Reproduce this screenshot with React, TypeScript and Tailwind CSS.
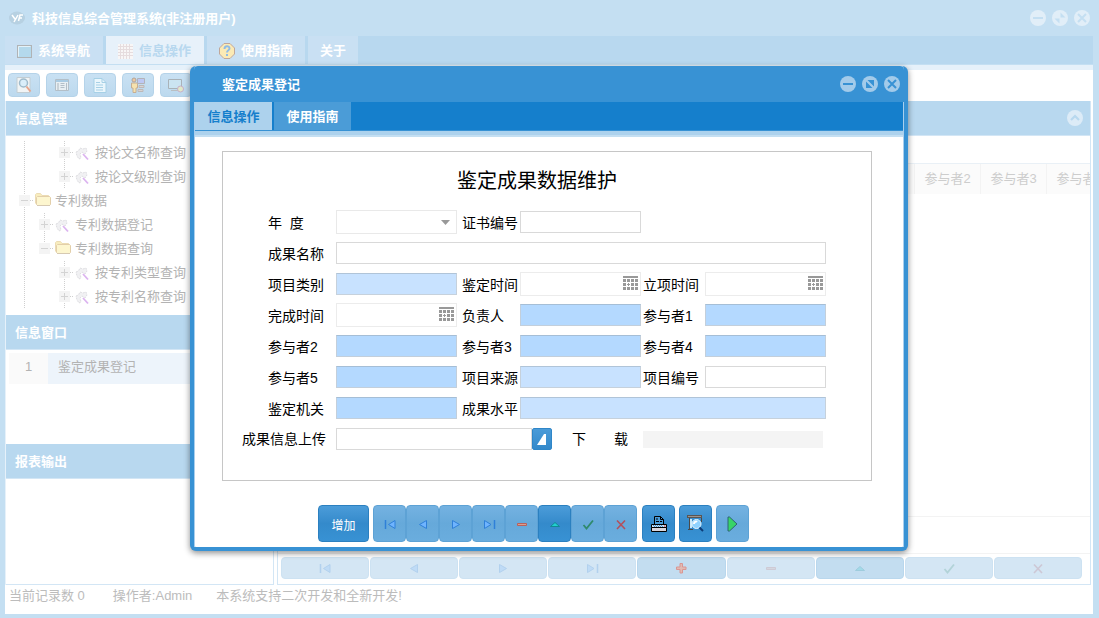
import React from "react";
import clsx from "clsx";

type NavKind = "first" | "prev" | "next" | "last" | "plus" | "minus" | "up" | "check" | "cross";

const NAV_LABELS: Record<NavKind, string> = {
    first: "首记录",
    prev: "上一条",
    next: "下一条",
    last: "末记录",
    plus: "新增",
    minus: "删除",
    up: "编辑",
    check: "保存",
    cross: "取消",
};

function NavIcon({ kind }: { kind: NavKind }) {
    return (
        <svg width="14" height="14" viewBox="0 0 14 14" fill="none" aria-hidden="true">
            {kind === "first" && (
                <>
                    <path d="M2.500 3v9" stroke="#2f80d8" strokeWidth="1.500" />
                    <path d="M12 3.500v8L5.500 7.500z" fill="#6fb4ff" stroke="#2f80d8" />
                </>
            )}
            {kind === "prev" && <path d="M10.500 3.500v8L3.500 7.500z" fill="#6fb4ff" stroke="#2f80d8" />}
            {kind === "next" && <path d="M3.500 3.500v8l7-4z" fill="#6fb4ff" stroke="#2f80d8" />}
            {kind === "last" && (
                <>
                    <path d="M12.500 3v9" stroke="#2f80d8" strokeWidth="1.500" />
                    <path d="M2.500 3.500v8L9 7.500z" fill="#6fb4ff" stroke="#2f80d8" />
                </>
            )}
            {kind === "plus" && <path d="M6 2.500h2.500V6H12v2.500H8.500V12H6V8.500H2.500V6H6z" fill="#ff9a78" stroke="#f0523a" />}
            {kind === "minus" && <path d="M2.500 6.500h9v2h-9z" fill="#d8a090" stroke="#b8605c" />}
            {kind === "up" && <path d="M2.500 9.500h9L7 5.500z" fill="#22d0cf" stroke="#108a94" />}
            {kind === "check" && <path d="M2.500 8l3 3.500 6.500-8" stroke="#2f8a6c" strokeWidth="1.800" />}
            {kind === "cross" && <path d="M3 3.500l8 8.500M11 3.500L3 12" stroke="#b4505c" strokeWidth="1.600" />}
        </svg>
    );
}

function WindowButtons({ color, maximized }: { color: string; maximized: boolean }) {
    const button = clsx("size-4 rounded-full", maximized ? "bg-[#e1eef8]" : "bg-[#a3cbea]");
    return (
        <div className="flex gap-1.5">
            <button type="button" aria-label="最小化" className={button}>
                <svg viewBox="0 0 16 16" aria-hidden="true">
                    <path d="M3 8h10" stroke={color} strokeWidth="2" />
                </svg>
            </button>
            <button type="button" aria-label="还原" className={button}>
                <svg viewBox="0 0 16 16" fill={color} aria-hidden="true">
                    {maximized ? (
                        <path d="M8.500 2.500v5h5zM7.500 13.500v-5h-5z" />
                    ) : (
                        <path d="M5.500 4H12v6.500zM4 5.500V12h6.500z" />
                    )}
                </svg>
            </button>
            <button type="button" aria-label="关闭" className={button}>
                <svg viewBox="0 0 16 16" aria-hidden="true">
                    <path d="M4 4l8 8M12 4l-8 8" stroke={color} strokeWidth="2" />
                </svg>
            </button>
        </div>
    );
}

/* Main window: menu tabs */

function MainTabs() {
    const tab = "flex h-full items-center gap-1.5 px-3 pt-0.5 text-[13px] font-bold";
    return (
        <nav className="flex h-[29px] gap-[3px] border-b border-[#c4dff2] bg-[#b8d8ef]">
            <button type="button" className={clsx(tab, "w-[98px] bg-[#c9e0f3] text-white")}>
                <svg width="15" height="13" viewBox="0 0 15 13" aria-hidden="true">
                    <rect x=".5" y=".5" width="14" height="12" fill="#b4d9ec" stroke="#b0b3b5" />
                    <path d="M1.500 11.500v-10h12" fill="none" stroke="#e4f2f9" />
                </svg>
                系统导航
            </button>
            <button type="button" className={clsx(tab, "w-[98px] bg-[#e7f1fa] text-[#b8d8ef]")}>
                <svg width="15" height="15" viewBox="0 0 15 15" aria-hidden="true">
                    <rect width="15" height="15" fill="#f8f6f6" />
                    <path
                        d="M0 2.500h15M0 5.500h15M0 8.500h15M0 11.500h15M2.500 0v15M5.500 0v15M8.500 0v15M11.500 0v15"
                        stroke="#e6dcde"
                    />
                </svg>
                信息操作
            </button>
            <button type="button" className={clsx(tab, "w-[98px] bg-[#c9e0f3] text-white")}>
                <svg width="16" height="16" viewBox="0 0 16 16" aria-hidden="true">
                    <path d="M5 .5h6L15.500 5v6L11 15.500H5L.5 11V5z" fill="#fbeab5" stroke="#c0a79a" />
                    <path
                        d="M5.500 6c0-3.500 5-3.500 5-.5 0 2-2.500 1.500-2.500 4M8 11v2"
                        fill="none"
                        stroke="#8fbce6"
                        strokeWidth="2"
                    />
                </svg>
                使用指南
            </button>
            <button type="button" className={clsx(tab, "bg-[#c9e0f3] text-white")}>
                关于
            </button>
        </nav>
    );
}

function Toolbar() {
    const button =
        "flex h-6 w-8 items-center justify-center rounded-sm border border-[#b5d3e9] bg-linear-to-b from-[#c9e1f3] to-[#bcd9ee]";
    return (
        <div className="flex h-[31px] gap-1.5 bg-white px-[3px] pt-[3px]">
            <button type="button" aria-label="查找" className={button}>
                <svg width="16" height="16" viewBox="0 0 16 16" fill="none" aria-hidden="true">
                    <path d="M1 .5h13v15H1z" fill="#f1f4f5" stroke="#c2cdd3" />
                    <circle cx="7.500" cy="6" r="4" fill="#dbeefa" stroke="#9fbbcc" strokeWidth="1.500" />
                    <path d="M10.500 9.500l4 5" stroke="#e6a58d" strokeWidth="2" />
                </svg>
            </button>
            <button type="button" aria-label="表单" className={button}>
                <svg width="14" height="14" viewBox="0 0 14 14" fill="none" aria-hidden="true">
                    <path d="M.5 1.500h13v11H.5z" fill="#e8eff3" stroke="#b3bfc8" />
                    <path d="M1 3h12" stroke="#a9cbe3" strokeWidth="2" />
                    <path d="M3 5v7" stroke="#c9d2d8" strokeWidth="2" />
                    <path d="M5.500 5.500h4M5.500 7.500h4M5.500 9.500h4M11.500 5v7" stroke="#b3bfc8" />
                </svg>
            </button>
            <button type="button" aria-label="文档" className={button}>
                <svg width="14" height="15" viewBox="0 0 14 15" fill="none" aria-hidden="true">
                    <path d="M1 .5h8l4 4v10H1z" fill="#eaf6fc" stroke="#a6d0e6" />
                    <path d="M9 .5v4h4M3 4.500h4M3 7h7M3 9.500h7M3 12h7" stroke="#a6d0e6" />
                </svg>
            </button>
            <button type="button" aria-label="用户" className={button}>
                <svg width="16" height="16" viewBox="0 0 16 16" fill="none" aria-hidden="true">
                    <circle cx="4" cy="3" r="2" fill="#eec8a0" stroke="#b0a59c" />
                    <path d="M1.500 6h6v5H6v4.500H3V11H1.500z" fill="#f6e2ae" stroke="#c6ae92" />
                    <path d="M7.500 1.500h7v5h-7z" fill="#bdc8f4" stroke="#b3b3b8" />
                    <path d="M9 8.500h5v2H9zM8 12.500h5v2H8z" fill="#d8d4d4" stroke="#bdb8b8" />
                </svg>
            </button>
            <button type="button" aria-label="监控" className={button}>
                <svg width="17" height="15" viewBox="0 0 17 15" fill="none" aria-hidden="true">
                    <path d="M.5 1.500h13v9H.5z" fill="#cbe4f2" stroke="#a9b2b8" />
                    <path d="M3 12.500h8" stroke="#b9bfc3" />
                    <circle cx="12.500" cy="11" r="3" fill="#dfe8c8" stroke="#c8aec8" />
                </svg>
            </button>
        </div>
    );
}

/* Left side: tree */

type TreeNode = {
    text: string;
    level: 0 | 1 | 2;
    folder?: boolean;
    lastChild?: boolean;
};

const TREE: TreeNode[] = [
    { text: "按论文名称查询", level: 2 },
    { text: "按论文级别查询", level: 2, lastChild: true },
    { text: "专利数据", level: 0, folder: true },
    { text: "专利数据登记", level: 1 },
    { text: "专利数据查询", level: 1, folder: true, lastChild: true },
    { text: "按专利类型查询", level: 2 },
    { text: "按专利名称查询", level: 2 },
];

function TreeGuide() {
    return (
        <svg width="20" height="24" aria-hidden="true">
            <path d="M10.500 0v24" stroke="#cfcfcf" strokeDasharray="1 1" />
        </svg>
    );
}

function TreeExpander({ open, last }: { open?: boolean; last?: boolean }) {
    return (
        <svg width="20" height="24" fill="none" aria-hidden="true">
            <path d={last ? "M10.500 0v12" : "M10.500 0v24"} stroke="#cfcfcf" strokeDasharray="1 1" />
            <path d="M16 11.500h4" stroke="#cfcfcf" strokeDasharray="1 1" />
            <rect x="5" y="6" width="11" height="11" fill="#f4f4f4" />
            <path d={open ? "M7 11.500h7" : "M7 11.500h7M10.500 8v7"} stroke="#d3d3d3" />
        </svg>
    );
}

function FolderIcon() {
    return (
        <svg className="mb-1" width="16" height="13" viewBox="0 0 16 13" fill="none" aria-hidden="true">
            <path d="M.5 10.500v-9l1-1h4l1.500 2h6.500l1 1.500" fill="#f8edbe" stroke="#ecdcb4" />
            <path d="M2.500 3.500h12l1 1v7l-1 1h-12l-1-1v-7z" fill="#fdf6cf" stroke="#e3cfaa" />
            <path d="M2 12.500h13" stroke="#d6c9b2" />
        </svg>
    );
}

function WandIcon() {
    return (
        <svg width="15" height="15" viewBox="0 0 15 15" fill="none" aria-hidden="true">
            <path
                d="M1 6l2.500-1L5 2l3 1 3-1 1 3-2 3-3-2-2 2 1 4-2 1-2-3z"
                fill="#f1f1f3"
                stroke="#dedee2"
                strokeDasharray="2 1"
            />
            <path d="M8 8l5 5.500" stroke="#dcb4f0" strokeWidth="1.800" />
        </svg>
    );
}

function Tree() {
    return (
        <ul className="h-[179px] overflow-hidden pt-[5px] pl-2">
            {TREE.map((node) => (
                <li key={node.text} className="flex h-6 items-center text-[13px] whitespace-nowrap text-[#b3b3b3]">
                    {node.level > 0 && <TreeGuide />}
                    {node.level > 1 && <span className="w-5" />}
                    <TreeExpander open={node.folder} last={node.lastChild && node.folder} />
                    <span className="flex w-[21px] justify-center pr-1">
                        {node.folder ? <FolderIcon /> : <WandIcon />}
                    </span>
                    {node.text}
                </li>
            ))}
        </ul>
    );
}

function PanelHeader({ title }: { title: string }) {
    return (
        <h2 className="flex h-[35px] items-center border-b border-[#d3e6f5] bg-[#b8d8ef] px-[9px] pt-0.5 text-[13px] font-bold text-white">
            {title}
        </h2>
    );
}

function Sidebar() {
    return (
        <aside className="flex w-[268px] flex-col border-r border-b border-[#d3e6f5] bg-white">
            <PanelHeader title="信息管理" />
            <Tree />
            <PanelHeader title="信息窗口" />
            <div className="h-[94px] p-[3px]">
                <table className="w-full text-[13px] text-[#b3b3b3]">
                    <tbody>
                        <tr className="h-[31px]">
                            <td className="w-[39px] bg-[#fafafa] pb-1 text-center">1</td>
                            <td className="bg-[#edf4fb] pb-1 pl-2.5">鉴定成果登记</td>
                        </tr>
                    </tbody>
                </table>
            </div>
            <PanelHeader title="报表输出" />
        </aside>
    );
}

/* Right side: data grid */

const MAIN_NAV: NavKind[] = ["first", "prev", "next", "last", "plus", "minus", "up", "check", "cross"];

function DataPanel() {
    return (
        <section className="flex min-w-0 flex-1 flex-col border-r border-b border-l border-[#d3e6f5] bg-white">
            <div className="flex h-[35px] items-center justify-end border-b border-[#d3e6f5] bg-[#b8d8ef] pr-[7px]">
                <button type="button" aria-label="收起" className="size-4 rounded-full bg-[#dcebf7]">
                    <svg viewBox="0 0 16 16" fill="none" aria-hidden="true">
                        <path d="M4 10l4-4 4 4" stroke="#b8d8ef" strokeWidth="2.200" />
                    </svg>
                </button>
            </div>
            <div className="mt-[27px] flex-1 overflow-hidden border-t border-[#e9f0f6]">
                <table className="w-[834px] table-fixed text-[13px]">
                    <thead>
                        <tr className="h-[30px] bg-[#fbfbfb] text-left whitespace-nowrap text-[#cdcdcd]">
                            <th className="w-[636px] border-r border-[#f3f3f3]" />
                            <th className="border-r border-[#f3f3f3] pl-2.5 font-normal">参与者2</th>
                            <th className="border-r border-[#f3f3f3] pl-2.5 font-normal">参与者3</th>
                            <th className="pl-2.5 font-normal">参与者4</th>
                        </tr>
                    </thead>
                </table>
            </div>
            <div className="h-[38px] border-y border-[#f3f3f3]" />
            <div className="flex h-[30px] gap-px pt-[3px] pr-2 pb-1 pl-[3px]">
                {MAIN_NAV.map((kind) => (
                    <button
                        key={kind}
                        type="button"
                        aria-label={NAV_LABELS[kind]}
                        className={clsx(
                            "flex h-[22px] flex-1 items-center justify-center rounded-sm border",
                            kind === "plus" || kind === "up"
                                ? "border-[#b9d7ed] bg-[#c3ddf0]"
                                : "border-[#cde2f2] bg-[#d4e6f4]"
                        )}
                    >
                        <span className={kind === "plus" ? "opacity-50" : "opacity-20"}>
                            <NavIcon kind={kind} />
                        </span>
                    </button>
                ))}
            </div>
        </section>
    );
}

/* Dialog: record form */

type Field = {
    id: string;
    label: string;
    kind: "select" | "text" | "date";
    column: 1 | 2 | 3;
    tone?: "required" | "lookup";
    span?: string;
};

const FIELDS: Field[] = [
    { id: "year", label: "年\u00a0\u00a0度", kind: "select", column: 1 },
    { id: "cert-no", label: "证书编号", kind: "text", column: 2 },
    { id: "name", label: "成果名称", kind: "text", column: 1, span: "col-span-5" },
    { id: "category", label: "项目类别", kind: "text", column: 1, tone: "lookup" },
    { id: "appraisal-date", label: "鉴定时间", kind: "date", column: 2 },
    { id: "start-date", label: "立项时间", kind: "date", column: 3 },
    { id: "finish-date", label: "完成时间", kind: "date", column: 1 },
    { id: "owner", label: "负责人", kind: "text", column: 2, tone: "required" },
    { id: "member1", label: "参与者1", kind: "text", column: 3, tone: "required" },
    { id: "member2", label: "参与者2", kind: "text", column: 1, tone: "required" },
    { id: "member3", label: "参与者3", kind: "text", column: 2, tone: "required" },
    { id: "member4", label: "参与者4", kind: "text", column: 3, tone: "required" },
    { id: "member5", label: "参与者5", kind: "text", column: 1, tone: "required" },
    { id: "source", label: "项目来源", kind: "text", column: 2, tone: "lookup" },
    { id: "project-no", label: "项目编号", kind: "text", column: 3 },
    { id: "agency", label: "鉴定机关", kind: "text", column: 1, tone: "required" },
    { id: "level", label: "成果水平", kind: "text", column: 2, tone: "lookup", span: "col-span-3" },
];

const LABEL_COLUMN = {
    1: "col-start-1 pl-[26px]",
    2: "col-start-3 pl-[5px]",
    3: "col-start-5 pl-0.5",
};

function CalendarIcon() {
    return (
        <svg width="16" height="15" viewBox="0 0 16 15" fill="#999" aria-hidden="true">
            <path d="M0 0h15v2H0z" />
            <path d="M0 3h3v3H0zM4 3h3v3H4zM8 3h3v3H8zM12 3h3v3h-3z" />
            <path d="M0 7h3v3H0zM5 7h1v1h1v1H6v1H5V9H4V8h1zM8 7h3v3H8zM12 7h3v3h-3z" />
            <path d="M0 11h3v3H0zM4 11h3v3H4zM8 11h3v3H8zM12 11h3v3h-3z" />
        </svg>
    );
}

function FieldControl({ field }: { field: Field }) {
    if (field.kind === "select") {
        return (
            <div className="relative">
                <select id={field.id} className="block h-6 w-full appearance-none border border-[#e9e9e9] bg-white px-1">
                    <option value="" />
                </select>
                <svg
                    className="pointer-events-none absolute top-2.5 right-[7px]"
                    width="9"
                    height="5"
                    viewBox="0 0 9 5"
                    aria-hidden="true"
                >
                    <path d="M0 0h9L4.500 5z" fill="#999" />
                </svg>
            </div>
        );
    }
    if (field.kind === "date") {
        return (
            <div className="relative">
                <input id={field.id} type="text" className="block h-6 w-full border border-[#ececec] bg-white px-1" />
                <button type="button" aria-label="选择日期" className="absolute top-1 right-0.5">
                    <CalendarIcon />
                </button>
            </div>
        );
    }
    return (
        <input
            id={field.id}
            type="text"
            className={clsx(
                "block h-[22px] w-full border px-1",
                field.span,
                field.tone === "required" && "border-[#c3cfdb] border-t-[#a5bed6] bg-[#b4d9ff]",
                field.tone === "lookup" && "border-[#c6d1dc] border-t-[#b0c4d8] bg-[#c8e2ff]",
                !field.tone && "border-[#d9d9d9] bg-white"
            )}
        />
    );
}

function RecordForm() {
    return (
        <form className="h-[330px] border border-[#c6c6c6] px-[19px] text-[14px] text-black">
            <h1 className="mt-[15px] pr-5 text-center text-[20px] leading-7">鉴定成果数据维护</h1>
            <div className="mt-4 grid auto-rows-[22px] grid-cols-[94px_121px_63px_121px_64px_121px] items-center gap-y-[9px]">
                {FIELDS.map((field) => (
                    <React.Fragment key={field.id}>
                        <label
                            htmlFor={field.id}
                            className={clsx("pt-0.5 leading-5 whitespace-nowrap", LABEL_COLUMN[field.column])}
                        >
                            {field.label}
                        </label>
                        <FieldControl field={field} />
                    </React.Fragment>
                ))}
                <label htmlFor="upload" className="col-start-1 leading-5 whitespace-nowrap">
                    成果信息上传
                </label>
                <div className="col-span-5 flex items-center">
                    <input id="upload" type="text" className="h-[22px] w-[196px] border border-[#d9d9d9] bg-white px-1" />
                    <button
                        type="button"
                        aria-label="上传"
                        className="flex h-[22px] w-5 items-center justify-center rounded-xs border border-[#2f86c8] bg-linear-to-b from-[#4a9bd8] to-[#3389cb]"
                    >
                        <svg width="10" height="12" viewBox="0 0 10 12" aria-hidden="true">
                            <path d="M0 12L7 1h2v11z" fill="#fff" />
                        </svg>
                    </button>
                    <label htmlFor="download" className="ml-5 w-[71px] leading-5 whitespace-nowrap">
                        下　　载
                    </label>
                    <input id="download" type="text" readOnly className="h-[17px] w-[180px] bg-[#f4f4f4]" />
                </div>
            </div>
        </form>
    );
}

const FORM_NAV: NavKind[] = ["first", "prev", "next", "last", "minus", "up", "check", "cross"];

const ACTIVE_BUTTON = "border-[#2b80c0] bg-linear-to-b from-[#4b9cd9] via-[#348acb] to-[#3892d4]";
const MUTED_BUTTON = "border-[#5da2d5] bg-linear-to-b from-[#74b2e1] via-[#66a9da] to-[#6aadde]";

function FormActions() {
    const button = "flex h-[37px] w-[33px] items-center justify-center rounded-sm border";
    return (
        <div className="mt-6 flex pl-[96px]">
            <button
                type="button"
                className={clsx("h-[37px] w-[51px] rounded-sm border pt-1 text-[12px] text-white", ACTIVE_BUTTON)}
            >
                增加
            </button>
            <div className="ml-1 flex">
                {FORM_NAV.map((kind) => (
                    <button
                        key={kind}
                        type="button"
                        aria-label={NAV_LABELS[kind]}
                        className={clsx(button, kind === "up" ? ACTIVE_BUTTON : MUTED_BUTTON)}
                    >
                        <NavIcon kind={kind} />
                    </button>
                ))}
            </div>
            <div className="ml-[5px] flex gap-1">
                <button type="button" aria-label="打印" className={clsx(button, ACTIVE_BUTTON)}>
                    <svg width="16" height="16" viewBox="0 0 16 16" fill="none" aria-hidden="true">
                        <path d="M3.500 8V.5h6l3 3V8" fill="#4a9bd8" stroke="#000" />
                        <path d="M9.500 .5v3h3M5 3h2M5 5.500h3M9 5.500h2" stroke="#000" />
                        <path d="M.5 8.500h15v3H.5z" fill="#cfe4f5" stroke="#000" />
                        <path d="M2 9.500h10M3 10.500h9" stroke="#4b94d0" strokeDasharray="1 1" />
                        <path d="M13 10h1.500" stroke="#e03030" />
                        <path d="M.5 11.500h15v4H.5z" fill="#d9d5dc" stroke="#000" />
                    </svg>
                </button>
                <button type="button" aria-label="预览" className={clsx(button, ACTIVE_BUTTON)}>
                    <svg width="17" height="17" viewBox="0 0 17 17" fill="none" aria-hidden="true">
                        <path d="M0 1.500h15" stroke="#5a5552" strokeWidth="3" />
                        <path d="M1 1.500h13" stroke="#9a9490" />
                        <path d="M2.500 3v11M14.500 3v4M1 14.500h5" stroke="#4a4a4a" />
                        <path d="M4 4v9" stroke="#c8e8fa" strokeWidth="2" />
                        <circle cx="9.500" cy="9" r="4.500" fill="#8fd2ff" stroke="#e4f6ff" />
                        <path d="M7 9c0-2 2-3 3-2" stroke="#fff" strokeWidth="2" />
                        <path d="M12.500 12.500l3.500 3.500" stroke="#0c3c78" strokeWidth="2" />
                    </svg>
                </button>
                <button type="button" aria-label="执行" className={clsx(button, MUTED_BUTTON)}>
                    <svg width="11" height="16" viewBox="0 0 11 16" aria-hidden="true">
                        <path d="M1 1v14h1.500l7.500-7-7.500-7z" fill="#38d468" stroke="#2f6474" />
                    </svg>
                </button>
            </div>
        </div>
    );
}

function RecordDialog() {
    return (
        <div
            role="dialog"
            aria-label="鉴定成果登记"
            className="w-[718px] rounded-md border-4 border-t-0 border-[#3892d4] bg-white shadow-[0_2px_6px_rgba(0,0,0,0.45)]"
        >
            <div className="flex h-[36px] items-center justify-between rounded-t-sm bg-[#3892d4] pr-1 pl-7">
                <span className="pt-0.5 text-[13px] font-bold text-white">鉴定成果登记</span>
                <WindowButtons color="#3892d4" maximized={false} />
            </div>
            <div className="border-r border-l border-[#a9cfee]">
                <div className="flex h-[29px] gap-0.5 border-b border-[#3892d4] bg-[#157fcc]">
                    <button type="button" className="w-[77px] bg-[#add2ed] pt-0.5 text-[13px] font-bold text-[#157fcc]">
                        信息操作
                    </button>
                    <button type="button" className="w-[77px] bg-[#4b9cd7] pt-0.5 text-[13px] font-bold text-white">
                        使用指南
                    </button>
                </div>
                <div className="h-1.5 border-b-2 border-[#c4dff2] bg-[#add2ed]" />
                <div className="px-[27px] pt-3.5 pb-[5px] pr-[31px]">
                    <RecordForm />
                    <FormActions />
                </div>
            </div>
        </div>
    );
}

export default function App() {
    return (
        <div className="relative flex min-h-screen flex-col overflow-hidden border-x-[6px] border-b-4 border-l-[5px] border-[#c4dff2] bg-white font-['Liberation_Sans','Noto_Sans_CJK_SC',sans-serif]">
            <header className="flex h-9 items-center justify-between bg-[#c4dff2] pr-[3px] pl-1">
                <div className="flex items-center gap-[7px]">
                    <svg width="16" height="14" viewBox="0 0 16 14" fill="none" aria-hidden="true">
                        <ellipse cx="8" cy="7" rx="8" ry="6.500" fill="#b7d1e2" />
                        <path d="M3 4l3 4M9 4l-4 7M9.500 10l1.500-6h3M10 7h3" stroke="#fff" strokeWidth="1.500" />
                    </svg>
                    <span className="pt-0.5 text-[13px] font-bold text-white">科技信息综合管理系统(非注册用户)</span>
                </div>
                <WindowButtons color="#c4dff2" maximized />
            </header>
            <MainTabs />
            <div className="h-[5px] bg-[#e6f1fa]" />
            <Toolbar />
            <main className="flex flex-1 gap-[3px] border-l border-[#e6f1fa] pr-0.5">
                <Sidebar />
                <DataPanel />
            </main>
            <footer className="flex h-[29px] px-1 pt-px text-[13px] leading-5 whitespace-pre text-[#bcbcbc]">
                <span>当前记录数 0</span>
                <span className="ml-7">操作者:Admin</span>
                <span className="ml-6">本系统支持二次开发和全新开发!</span>
            </footer>
            <div className="absolute inset-0 flex items-start justify-center pt-[66px]">
                <RecordDialog />
            </div>
        </div>
    );
}
